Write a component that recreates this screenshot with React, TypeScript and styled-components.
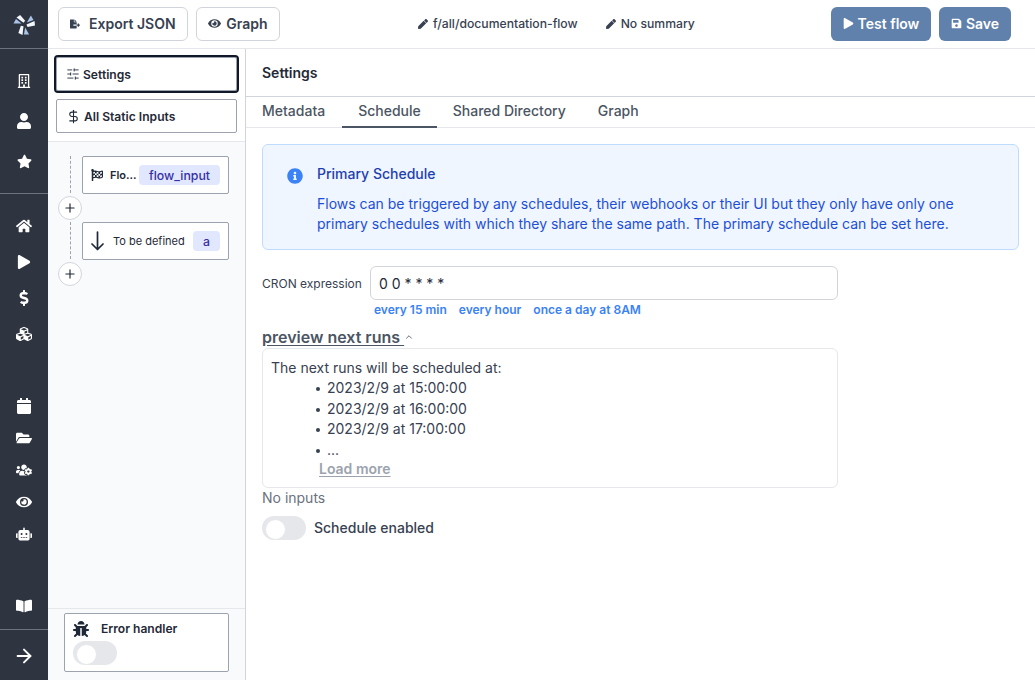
import React from "react";
import styled, { createGlobalStyle } from "styled-components";
import {
  FaBookOpen, FaBug, FaCalendar, FaCubes, FaDollarSign, FaEye,
  FaFileExport, FaFlagCheckered, FaFolderOpen, FaHome, FaInfoCircle, FaPen, FaPlay,
  FaRegBuilding, FaRobot, FaSave, FaStar, FaUser, FaUsersCog,
} from "react-icons/fa";
import { ArrowRight, ChevronUp, DollarSign, Plus, SlidersHorizontal } from "lucide-react";

const GlobalStyle = createGlobalStyle`
  html, body { margin: 0; padding: 0; height: 100%; background: #fff; }
  body { font-family: Inter, "Liberation Sans", sans-serif; color: #1f2937; overflow: hidden; }
  * { box-sizing: border-box; }
`;

const Page = styled.div`
  display: flex;
  width: 1035px;
  height: 680px;
`;

const Sidebar = styled.nav`
  width: 48px;
  flex: none;
  display: flex;
  flex-direction: column;
  background: #2e3440;
  color: #fff;
`;

const LogoBox = styled.div`
  height: 49px;
  flex: none;
  display: flex;
  align-items: center;
  justify-content: center;
  border-bottom: 1px solid #6b7280;
`;

const SideGroup = styled.div<{ $h: number; $pad: number; $line?: boolean }>`
  height: ${(p) => p.$h}px;
  padding-top: ${(p) => p.$pad}px;
  flex: none;
  display: flex;
  flex-direction: column;
  border-bottom: ${(p) => (p.$line ? "1px solid #6b7280" : "none")};
`;

const SideIcon = styled.div<{ $h: number }>`
  height: ${(p) => p.$h}px;
  flex: none;
  display: flex;
  align-items: center;
  justify-content: center;
`;

const Main = styled.div`
  flex: 1;
  min-width: 0;
  display: flex;
  flex-direction: column;
`;

const TopBar = styled.header`
  height: 49px;
  flex: none;
  display: flex;
  align-items: center;
  padding: 0 24px 1px 10px;
  border-bottom: 1px solid #e5e7eb;
`;

const OutlineButton = styled.button<{ $w: number }>`
  width: ${(p) => p.$w}px;
  height: 34px;
  display: flex;
  align-items: center;
  justify-content: center;
  gap: 5px;
  padding: 0;
  margin-right: 8px;
  background: #fff;
  border: 1px solid #d1d5db;
  border-radius: 6px;
  color: #374151;
  font: 600 14px Inter, sans-serif;
`;

const PathGroup = styled.div`
  display: flex;
  align-items: center;
  gap: 28px;
  margin-left: 130px;
  flex: 1;
`;

const PathItem = styled.span`
  display: flex;
  align-items: center;
  gap: 5px;
  font-size: 12.2px;
  font-weight: 500;
  color: #374151;
`;

const SolidButton = styled.button<{ $w: number }>`
  width: ${(p) => p.$w}px;
  height: 34px;
  display: flex;
  align-items: center;
  justify-content: center;
  gap: 4px;
  padding: 0;
  margin-left: 8px;
  background: #5f81ab;
  border: none;
  border-radius: 6px;
  color: #fff;
  font: 600 14px Inter, sans-serif;
`;

const Body = styled.div`
  flex: 1;
  min-height: 0;
  display: flex;
`;

const LeftPanel = styled.aside`
  width: 198px;
  flex: none;
  display: flex;
  flex-direction: column;
  background: #f9fafb;
  border-right: 1px solid #d1d5db;
`;

const PanelTop = styled.div`
  height: 93px;
  flex: none;
  display: flex;
  flex-direction: column;
  gap: 8px;
  padding: 8px;
  background: #fff;
  border-bottom: 1px solid #e5e7eb;
`;

const PanelButton = styled.div<{ $active?: boolean }>`
  height: 34px;
  flex: none;
  display: flex;
  align-items: center;
  gap: 3px;
  padding-left: 9px;
  background: #fff;
  border: 1px solid #9ca3af;
  border-radius: 2px;
  font-size: 12.1px;
  font-weight: 600;
  color: #1f2937;
  outline: ${(p) => (p.$active ? "2px solid #111827" : "none")};
  outline-offset: 0;
`;

const FlowArea = styled.div`
  flex: 1;
  padding-top: 14px;
  padding-left: 10px;
`;

const FlowRow = styled.div`
  display: flex;
  height: 37px;
`;

const Rail = styled.div`
  width: 24px;
  flex: none;
  position: relative;
  &::before {
    content: "";
    position: absolute;
    left: 12px;
    top: 0;
    bottom: 0;
    border-left: 1px dashed #9ca3af;
  }
`;

const ModuleCard = styled.div`
  width: 147px;
  height: 38px;
  display: flex;
  align-items: center;
  padding: 0 8px;
  background: #fff;
  border: 1px solid #9ca3af;
  border-radius: 2px;
`;

const ModuleName = styled.span<{ $bold?: boolean }>`
  flex: 1;
  min-width: 0;
  font-size: 11px;
  white-space: nowrap;
  font-weight: ${(p) => (p.$bold ? 600 : 400)};
  color: #1f2937;
  margin-left: ${(p) => (p.$bold ? "7px" : "9px")};
`;

const IdBadge = styled.span`
  height: 20px;
  display: flex;
  align-items: center;
  justify-content: center;
  padding: 0 10px;
  border-radius: 4px;
  background: #e0e7ff;
  color: #3730a3;
  font-size: 12.3px;
  font-weight: 500;
`;

const AddRow = styled.div`
  height: 29px;
  display: flex;
  align-items: center;
`;

const AddButton = styled.div`
  width: 24px;
  height: 24px;
  display: flex;
  align-items: center;
  justify-content: center;
  background: #fff;
  border: 1px solid #d1d5db;
  border-radius: 50%;
  color: #1f2937;
`;

const ErrorBox = styled.div`
  height: 72px;
  flex: none;
  padding: 4px 16px 0;
  border-top: 1px solid #e5e7eb;
`;

const ErrorCard = styled.div`
  height: 59px;
  display: flex;
  flex-direction: column;
  gap: 4px;
  padding: 6px 8px;
  background: #fff;
  border: 1px solid #9ca3af;
  border-radius: 2px;
`;

const ErrorHead = styled.div`
  display: flex;
  align-items: center;
  gap: 12px;
  height: 17px;
  font-size: 12.1px;
  font-weight: 600;
  color: #1f2937;
`;

const Toggle = styled.div`
  width: 44px;
  height: 24px;
  flex: none;
  position: relative;
  border-radius: 12px;
  background: #e5e7eb;
  &::after {
    content: "";
    position: absolute;
    left: 3px;
    top: 2.5px;
    width: 19px;
    height: 19px;
    border-radius: 50%;
    background: #fff;
    border: 1px solid #e5e7eb;
  }
`;

const Content = styled.main`
  flex: 1;
  min-width: 0;
  display: flex;
  flex-direction: column;
`;

const PaneTitle = styled.div`
  height: 48px;
  flex: none;
  display: flex;
  align-items: center;
  padding-left: 16px;
  font-size: 14px;
  font-weight: 600;
  color: #1f2937;
  border-bottom: 1px solid #d1d5db;
`;

const Tabs = styled.div`
  height: 31px;
  flex: none;
  display: flex;
  border-bottom: 1px solid #e5e7eb;
`;

const Tab = styled.div<{ $active?: boolean }>`
  height: 31px;
  display: flex;
  align-items: center;
  padding: 0 16px 2px;
  margin-bottom: -1px;
  font-size: 14px;
  font-weight: 500;
  color: #4b5563;
  border-bottom: 2px solid ${(p) => (p.$active ? "#4b5563" : "transparent")};
  &:first-child { padding-right: 17px; }
`;

const Pane = styled.div`
  flex: 1;
  padding: 16px 16px 0;
`;

const Alert = styled.div`
  height: 106px;
  display: flex;
  padding: 19px 0 0 24px;
  background: #eff6ff;
  border: 1px solid #bfdbfe;
  border-radius: 6px;
  color: #1d4ed8;
  font-size: 14px;
`;

const AlertIcon = styled.div`
  width: 30px;
  flex: none;
  padding-top: 4px;
  color: #3b82f6;
`;

const AlertTitle = styled.div`
  font-weight: 500;
  color: #1e40af;
  line-height: 20px;
  margin-bottom: 10px;
`;

const AlertText = styled.div`
  line-height: 20px;
`;

const CronRow = styled.div`
  display: flex;
  align-items: center;
  gap: 8px;
  margin-top: 16px;
`;

const CronLabel = styled.label`
  font-size: 12px;
  color: #374151;
`;

const CronInput = styled.div`
  width: 468px;
  height: 34px;
  display: flex;
  align-items: center;
  padding-left: 8px;
  border: 1px solid #d1d5db;
  border-radius: 6px;
  font-size: 14px;
  color: #1f2937;
`;

const Presets = styled.div`
  display: flex;
  gap: 12px;
  margin-left: 112px;
  height: 18px;
  align-items: center;
  font-size: 12px;
  font-weight: 600;
  color: #3b82f6;
`;

const PreviewToggle = styled.div`
  display: flex;
  align-items: center;
  height: 22px;
  margin-top: 8px;
  font-size: 16px;
  font-weight: 600;
  color: #4b5563;
`;

const PreviewLabel = styled.span`
  text-decoration: underline;
  text-underline-offset: 2px;
  white-space: pre;
`;

const PreviewBox = styled.div`
  width: 576px;
  height: 140px;
  padding: 9px 8px;
  border: 1px solid #e5e7eb;
  border-radius: 6px;
  font-size: 14px;
  line-height: 20.4px;
  color: #374151;
`;

const RunList = styled.ul`
  margin: 0;
  padding-left: 56px;
  list-style: none;
`;

const RunItem = styled.li`
  &::before {
    content: "";
    display: inline-block;
    width: 4px;
    height: 4px;
    margin: 0 7px 2px -11px;
    border-radius: 50%;
    background: #374151;
  }
`;

const LoadMore = styled.div`
  margin-left: 48px;
  margin-top: -1px;
  font-weight: 600;
  color: #9ca3af;
  text-decoration: underline;
  text-underline-offset: 2px;
`;

const NoInputs = styled.div`
  font-size: 14px;
  line-height: 20px;
  color: #6b7280;
`;

const SwitchRow = styled.div`
  display: flex;
  align-items: center;
  gap: 8px;
  margin-top: 8px;
  font-size: 14px;
  line-height: 22px;
  font-weight: 500;
  color: #374151;
`;

const WindmillLogo = () => (
  <svg width="23" height="23" viewBox="-11.5 -11.5 23 23">
    {[30, 150, 270].map((a) => (
      <path key={a} d="M1 -3 L1 -11 L5.5 -8.5 Z" fill="#a9c4e8" transform={`rotate(${a})`} />
    ))}
    {[-30, 90, 210].map((a) => (
      <path key={a} d="M0 -2 L-3.5 -10 L1 -10.5 L2.5 -3 Z" fill="#f3f6fb" transform={`rotate(${a})`} />
    ))}
  </svg>
);

const DownArrow = () => (
  <svg width="13" height="20" viewBox="0 0 13 20" fill="none" stroke="#1f2937" strokeWidth="1.7" strokeLinecap="round" strokeLinejoin="round">
    <path d="M6.5 1 V18.5 M1 13 L6.5 18.5 L12 13" />
  </svg>
);

const runs = ["2023/2/9 at 15:00:00", "2023/2/9 at 16:00:00", "2023/2/9 at 17:00:00", "..."];

export default function App() {
  return (
    <Page>
      <GlobalStyle />
      <Sidebar>
        <LogoBox><WindmillLogo /></LogoBox>
        <SideGroup $h={145} $pad={12} $line>
          <SideIcon $h={40}><FaRegBuilding size={14} /></SideIcon>
          <SideIcon $h={40}><FaUser size={16} /></SideIcon>
          <SideIcon $h={40}><FaStar size={15} /></SideIcon>
        </SideGroup>
        <SideGroup $h={196} $pad={14}>
          <SideIcon $h={36}><FaHome size={16} /></SideIcon>
          <SideIcon $h={36}><FaPlay size={14} /></SideIcon>
          <SideIcon $h={36}><FaDollarSign size={16} /></SideIcon>
          <SideIcon $h={36}><FaCubes size={16} /></SideIcon>
        </SideGroup>
        <SideGroup $h={160} $pad={0}>
          <SideIcon $h={32}><FaCalendar size={16} /></SideIcon>
          <SideIcon $h={32}><FaFolderOpen size={16} /></SideIcon>
          <SideIcon $h={32}><FaUsersCog size={16} /></SideIcon>
          <SideIcon $h={32}><FaEye size={16} /></SideIcon>
          <SideIcon $h={32}><FaRobot size={16} /></SideIcon>
        </SideGroup>
        <SideGroup $h={80} $pad={46} $line>
          <SideIcon $h={20}><FaBookOpen size={16} /></SideIcon>
        </SideGroup>
        <SideGroup $h={50} $pad={16}>
          <SideIcon $h={20}><ArrowRight size={22} strokeWidth={2.1} /></SideIcon>
        </SideGroup>
      </Sidebar>
      <Main>
        <TopBar>
          <OutlineButton $w={130}><FaFileExport size={10} />&nbsp;Export JSON</OutlineButton>
          <OutlineButton $w={84}><FaEye size={13} />Graph</OutlineButton>
          <PathGroup>
            <PathItem><FaPen size={10} />f/all/documentation-flow</PathItem>
            <PathItem><FaPen size={10} />No summary</PathItem>
          </PathGroup>
          <SolidButton $w={100}><FaPlay size={11} />Test flow</SolidButton>
          <SolidButton $w={72}><FaSave size={11} />Save</SolidButton>
        </TopBar>
        <Body>
          <LeftPanel>
            <PanelTop>
              <PanelButton $active><SlidersHorizontal size={14} strokeWidth={1.5} />Settings</PanelButton>
              <PanelButton><DollarSign size={15} strokeWidth={1.7} />All Static Inputs</PanelButton>
            </PanelTop>
            <FlowArea>
              <FlowRow>
                <Rail />
                <ModuleCard>
                  <FaFlagCheckered size={12} />
                  <ModuleName $bold>Flo...</ModuleName>
                  <IdBadge>flow_input</IdBadge>
                </ModuleCard>
              </FlowRow>
              <AddRow><AddButton><Plus size={14} /></AddButton></AddRow>
              <FlowRow>
                <Rail />
                <ModuleCard>
                  <DownArrow />
                  <ModuleName>To be defined</ModuleName>
                  <IdBadge>a</IdBadge>
                </ModuleCard>
              </FlowRow>
              <AddRow><AddButton><Plus size={14} /></AddButton></AddRow>
            </FlowArea>
            <ErrorBox>
              <ErrorCard>
                <ErrorHead><FaBug size={16} />Error handler</ErrorHead>
                <Toggle />
              </ErrorCard>
            </ErrorBox>
          </LeftPanel>
          <Content>
            <PaneTitle>Settings</PaneTitle>
            <Tabs>
              <Tab>Metadata</Tab>
              <Tab $active>Schedule</Tab>
              <Tab>Shared Directory</Tab>
              <Tab>Graph</Tab>
            </Tabs>
            <Pane>
              <Alert>
                <AlertIcon><FaInfoCircle size={16} /></AlertIcon>
                <div>
                  <AlertTitle>Primary Schedule</AlertTitle>
                  <AlertText>
                    Flows can be triggered by any schedules, their webhooks or their UI but they only have only one<br />
                    primary schedules with which they share the same path. The primary schedule can be set here.
                  </AlertText>
                </div>
              </Alert>
              <CronRow>
                <CronLabel>CRON expression</CronLabel>
                <CronInput>0 0 * * * *</CronInput>
              </CronRow>
              <Presets>
                <span>every 15 min</span>
                <span>every hour</span>
                <span>once a day at 8AM</span>
              </Presets>
              <PreviewToggle>
                <PreviewLabel>preview next runs </PreviewLabel>
                <ChevronUp size={10} />
              </PreviewToggle>
              <PreviewBox>
                The next runs will be scheduled at:
                <RunList>
                  {runs.map((r) => <RunItem key={r}>{r}</RunItem>)}
                </RunList>
                <LoadMore>Load more</LoadMore>
              </PreviewBox>
              <NoInputs>No inputs</NoInputs>
              <SwitchRow><Toggle />Schedule enabled</SwitchRow>
            </Pane>
          </Content>
        </Body>
      </Main>
    </Page>
  );
}
